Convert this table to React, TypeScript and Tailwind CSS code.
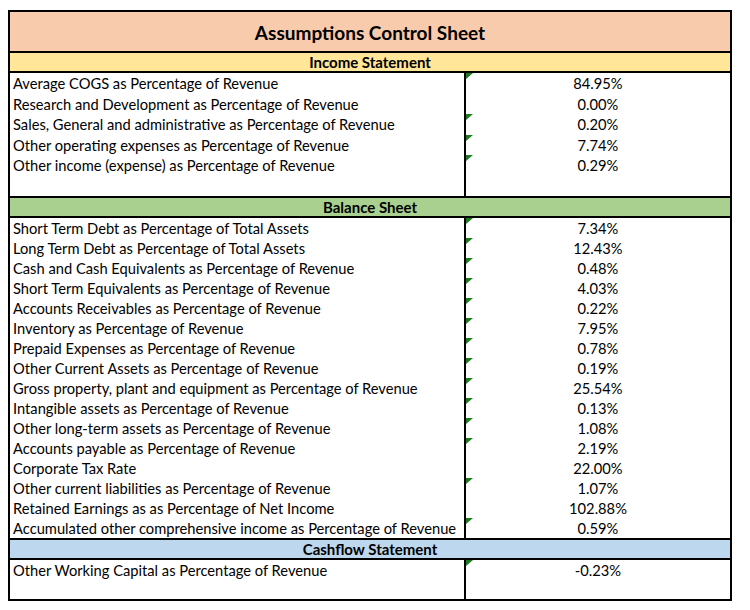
import React from "react";

type Row = { label: string; value: string; flag?: boolean };

const income: Row[] = [
  { label: "Average COGS as Percentage of Revenue", value: "84.95%", flag: true },
  { label: "Research and Development as Percentage of Revenue", value: "0.00%" },
  { label: "Sales, General and administrative as Percentage of Revenue", value: "0.20%", flag: true },
  { label: "Other operating expenses as Percentage of Revenue", value: "7.74%", flag: true },
  { label: "Other income (expense) as Percentage of Revenue", value: "0.29%", flag: true },
  { label: "", value: "" },
];

const balance: Row[] = [
  { label: "Short Term Debt as Percentage of Total Assets", value: "7.34%", flag: true },
  { label: "Long Term Debt as Percentage of Total Assets", value: "12.43%", flag: true },
  { label: "Cash and Cash Equivalents as Percentage of Revenue", value: "0.48%", flag: true },
  { label: "Short Term Equivalents as Percentage of Revenue", value: "4.03%", flag: true },
  { label: "Accounts Receivables as Percentage of Revenue", value: "0.22%", flag: true },
  { label: "Inventory as Percentage of Revenue", value: "7.95%", flag: true },
  { label: "Prepaid Expenses as Percentage of Revenue", value: "0.78%", flag: true },
  { label: "Other Current Assets as Percentage of Revenue", value: "0.19%", flag: true },
  { label: "Gross property, plant and equipment as Percentage of Revenue", value: "25.54%", flag: true },
  { label: "Intangible assets as Percentage of Revenue", value: "0.13%", flag: true },
  { label: "Other long-term assets as Percentage of Revenue", value: "1.08%", flag: true },
  { label: "Accounts payable as Percentage of Revenue", value: "2.19%", flag: true },
  { label: "Corporate Tax Rate", value: "22.00%" },
  { label: "Other current liabilities as Percentage of Revenue", value: "1.07%", flag: true },
  { label: "Retained Earnings as as Percentage of Net Income", value: "102.88%" },
  { label: "Accumulated other comprehensive income as Percentage of Revenue", value: "0.59%", flag: true },
];

const cashflow: Row[] = [
  { label: "Other Working Capital as Percentage of Revenue", value: "-0.23%", flag: true },
  { label: "", value: "" },
];

// excel's little green "number stored as text" corner marker
const Flag = () => (
  <svg className="absolute left-0 top-0" width="7" height="6" viewBox="0 0 7 6">
    <polygon points="0,0 7,0 0,6" fill="#1f7a1f" />
  </svg>
);

const Rows = ({ rows, h }: { rows: Row[]; h: string }) => (
  <div>
    {rows.map((r, i) => (
      <div key={i} className={`grid grid-cols-[456px_1fr] ${h}`}>
        <div className="border-r-2 border-black pl-[3px] leading-[21px] whitespace-nowrap">{r.label}</div>
        <div className="relative text-center leading-[21px]">
          {r.flag && <Flag />}
          {r.value}
        </div>
      </div>
    ))}
  </div>
);

const Header = ({ title, bg }: { title: string; bg: string }) => (
  <div className={`h-[22px] border-y-2 border-black font-bold text-[15px] text-center leading-[18px] ${bg}`}>{title}</div>
);

const App = () => {
  return (
    <div className="bg-white w-[750px] h-[610px] pt-[10px] pl-[8px] text-black text-[14.7px] font-['Lato',sans-serif]">
      <div className="w-[724px] border-2 border-black">
        <div className="h-[39px] bg-[#f8cbad] font-bold text-[19px] text-center leading-[42px]">
          Assumptions Control Sheet
        </div>
        <Header title="Income Statement" bg="bg-[#ffe699]" />
        <Rows rows={income} h="h-[20.5px]" />
        <Header title="Balance Sheet" bg="bg-[#a9d08e]" />
        <Rows rows={balance} h="h-[20px]" />
        <Header title="Cashflow Statement" bg="bg-[#bdd7ee]" />
        <Rows rows={cashflow} h="h-[19.5px]" />
      </div>
    </div>
  );
};

export default App;
